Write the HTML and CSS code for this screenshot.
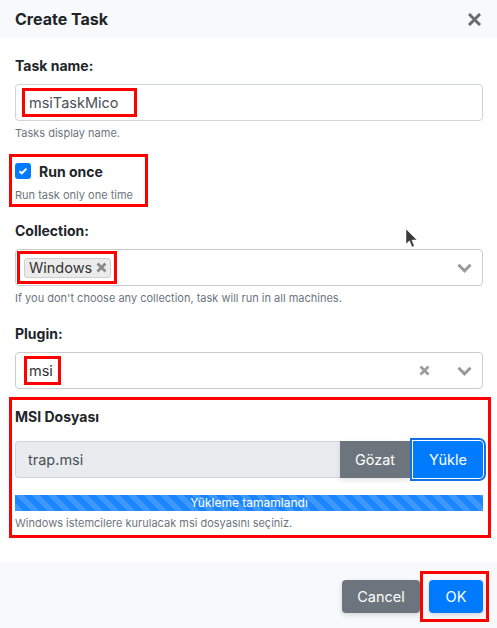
FILE: index.html
```html
<!DOCTYPE html>
<html>
<head>
<meta charset="utf-8">
<link rel="stylesheet" href="styles.css">
</head>
<body>
<div class="modal">
  <div class="modal-header">
    <div class="title">Create Task</div>
    <svg class="close" width="13" height="13" viewBox="0 0 13 13"><path d="M2 2 L11 11 M11 2 L2 11" stroke="#6b6b6b" stroke-width="3" stroke-linecap="square"/></svg>
  </div>
  <div class="modal-body">
    <div class="label">Task name:</div>
    <div class="input"><span class="mark mark-name">msiTaskMico</span></div>
    <div class="help">Tasks display name.</div>

    <div class="run-once">
      <div class="check-row">
        <span class="checkbox"><svg width="10" height="8" viewBox="0 0 10 8"><path d="M1.5 4.2 L3.8 6.3 L8.5 1.6" stroke="#fff" stroke-width="2" fill="none"/></svg></span>
        <span class="check-label">Run once</span>
      </div>
      <div class="help help-run">Run task only one time</div>
    </div>

    <div class="label label-collection">Collection:</div>
    <div class="select">
      <span class="mark mark-tag"><span class="tag">Windows<svg class="tag-x" width="11" height="11" viewBox="0 0 11 11"><path d="M1.5 1.5 L9.5 9.5 M9.5 1.5 L1.5 9.5" stroke="#8a8a8a" stroke-width="2.8"/></svg></span></span>
      <span class="spacer"></span>
      <svg class="chevron" width="15" height="10" viewBox="0 0 15 10"><path d="M1.5 1.8 L7.5 7.8 L13.5 1.8" stroke="#9a9a9a" stroke-width="3" fill="none"/></svg>
    </div>
    <div class="help">If you don't choose any collection, task will run in all machines.</div>

    <div class="label label-plugin">Plugin:</div>
    <div class="select">
      <span class="mark mark-msi">msi</span>
      <span class="spacer"></span>
      <svg class="clear" width="11" height="11" viewBox="0 0 11 11"><path d="M1.5 1.5 L9.5 9.5 M9.5 1.5 L1.5 9.5" stroke="#9a9a9a" stroke-width="2.6"/></svg>
      <svg class="chevron" width="15" height="10" viewBox="0 0 15 10"><path d="M1.5 1.8 L7.5 7.8 L13.5 1.8" stroke="#9a9a9a" stroke-width="3" fill="none"/></svg>
    </div>

    <div class="msi-box">
      <div class="label">MSI Dosyası</div>
      <div class="file-group">
        <div class="file-input">trap.msi</div>
        <div class="btn btn-secondary btn-browse">Gözat</div>
        <div class="btn btn-primary btn-upload">Yükle</div>
      </div>
      <div class="progress">Yükleme tamamlandı</div>
      <div class="help">Windows istemcilere kurulacak msi dosyasını seçiniz.</div>
    </div>
  </div>
  <div class="modal-footer">
    <div class="btn btn-secondary btn-cancel">Cancel</div>
    <div class="ok-mark"><div class="btn btn-primary btn-ok">OK</div></div>
  </div>
</div>
<svg class="cursor" width="14" height="21" viewBox="0 0 14 21"><path d="M1 1 L1 16 L4.5 12.8 L7 19 L9.3 18 L6.9 12 L12 12 Z" fill="#3a3a3a" stroke="#fff" stroke-width="0.8" stroke-opacity="0.6"/></svg>
</body>
</html>
```

FILE: styles.css
```css
html, body {
  margin: 0;
  padding: 0;
  background: #fff;
}
body {
  font-family: Inter, "Noto Sans", sans-serif;
  color: #212529;
  width: 497px;
  height: 628px;
  overflow: hidden;
  position: relative;
}
.modal {
  display: flex;
  flex-direction: column;
  height: 628px;
}
.modal-header {
  height: 38px;
  background: #f8f9fa;
  display: flex;
  align-items: center;
  justify-content: space-between;
  padding: 0 16px 0 15px;
  flex: none;
}
.title {
  font-size: 16px;
  font-weight: 700;
  line-height: 20px;
}
.close {
  display: block;
  margin-top: 1px;
}
.modal-body {
  padding: 18px 14px 25px 15px;
  flex: none;
}
.label {
  font-size: 14px;
  font-weight: 700;
  line-height: 20px;
}
.input {
  margin-top: 8px;
  height: 35px;
  border: 1px solid #ced4da;
  border-radius: 4px;
  display: flex;
  align-items: center;
  padding-left: 6px;
}
.mark {
  box-shadow: inset 0 0 0 3px #ff0000;
}
.mark-name {
  font-size: 14.5px;
  color: #495057;
  line-height: 23px;
  padding: 3px 18px 3px 7px;
}
.help {
  font-size: 11px;
  color: #6c757d;
  line-height: 16px;
  margin-top: 4px;
}
.run-once {
  display: inline-block;
  margin: 13px 0 0 -6px;
  border: 3px solid #ff0000;
  padding: 4px 12px 1px 3px;
}
.check-row {
  display: flex;
  align-items: center;
  height: 20px;
}
.checkbox {
  width: 16px;
  height: 16px;
  background: #007bff;
  border-radius: 3px;
  display: flex;
  align-items: center;
  justify-content: center;
  margin-right: 8px;
}
.check-label {
  font-size: 14px;
  font-weight: 700;
}
.help-run {
  margin-top: 6px;
}
.label-collection {
  margin-top: 14px;
}
.label-plugin {
  margin-top: 18px;
}
.select {
  margin-top: 8px;
  height: 35px;
  border: 1px solid #cccccc;
  border-radius: 4px;
  display: flex;
  align-items: center;
  padding: 0 10px 0 1px;
}
.mark-tag {
  display: flex;
  align-items: center;
  height: 33px;
  padding: 0 6px 0 7px;
  box-sizing: border-box;
}
.tag {
  display: flex;
  align-items: center;
  height: 18px;
  padding: 0 3px 0 4px;
  background: #ebebeb;
  border: 1px solid #cfcfcf;
  border-radius: 3px;
  font-size: 14.5px;
  color: #333;
}
.tag-x {
  margin-left: 4px;
}
.spacer {
  flex: 1;
}
.chevron {
  display: block;
}
.clear {
  display: block;
  margin-right: 27px;
}
.mark-msi {
  margin-left: 7px;
  font-size: 14.5px;
  color: #333;
  line-height: 29px;
  padding: 0 8px 0 5px;
}
.msi-box {
  margin: 8px -8px 0 -6px;
  border: 3px solid #ff0000;
  padding: 7px 5px 4px 3px;
}
.file-group {
  margin-top: 14px;
  display: flex;
  height: 37px;
}
.file-input {
  flex: 1;
  background: #e9ecef;
  border: 1px solid #ced4da;
  border-right: none;
  border-radius: 4px 0 0 4px;
  font-size: 14.5px;
  color: #495057;
  display: flex;
  align-items: center;
  padding-left: 12px;
}
.btn {
  display: flex;
  align-items: center;
  justify-content: center;
  font-size: 14.5px;
  color: #fff;
  box-sizing: border-box;
}
.btn-secondary {
  background: #6c757d;
}
.btn-primary {
  background: #007bff;
}
.btn-browse {
  width: 70px;
  box-shadow: 0 2px 5px rgba(0,0,0,0.12);
}
.btn-upload {
  width: 70px;
  margin-left: 3px;
  border-radius: 0 4px 4px 0;
  box-shadow: 0 0 0 1px #fff, 0 0 0 3px #1570e6;
}
.progress {
  margin-top: 17px;
  height: 16px;
  background-color: #1a85ff;
  background-image: linear-gradient(45deg, rgba(255,255,255,.15) 25%, transparent 25%, transparent 50%, rgba(255,255,255,.15) 50%, rgba(255,255,255,.15) 75%, transparent 75%, transparent);
  background-size: 16px 16px;
  color: #fff;
  font-size: 12px;
  line-height: 16px;
  text-align: center;
}
.modal-footer {
  flex: 1;
  background: #f8f9fa;
  display: flex;
  justify-content: flex-end;
  align-items: flex-start;
  padding: 8px 8px 0 0;
}
.btn-cancel {
  width: 78px;
  height: 33px;
  margin-top: 9px;
  border-radius: 4px;
  box-shadow: 0 2px 5px rgba(0,0,0,0.15);
}
.ok-mark {
  border: 3px solid #ff0000;
  padding: 6px 3px 6px 6px;
}
.btn-ok {
  width: 54px;
  height: 33px;
  border-radius: 4px;
  box-shadow: 0 2px 5px rgba(0,0,0,0.15);
}
.cursor {
  position: absolute;
  left: 405px;
  top: 228px;
}
```
